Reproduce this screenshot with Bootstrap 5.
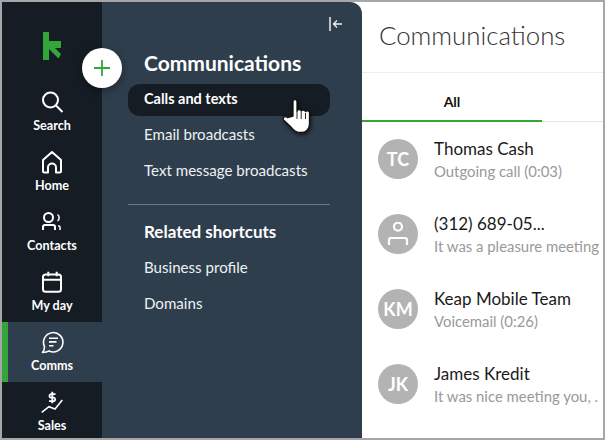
<!doctype html>
<html lang="en">
<head>
<meta charset="utf-8">
<title>Communications</title>
<link href="https://cdn.jsdelivr.net/npm/bootstrap@5.3.0/dist/css/bootstrap.min.css" rel="stylesheet">
<style>
html,body{height:100%;margin:0;overflow:hidden}
body{background:#a6a6a6;padding:2px;font-family:Lato,"Liberation Sans",sans-serif}
.app-frame{width:601px;height:436px;background:#fff;overflow:hidden;position:relative}
.rail{width:100px;flex:none;background:#151c24;color:#fff}
.rail-logo{height:80px;flex:none;padding:30px 0 0 41px}
.rail-item{height:60px;flex:none;font-size:12.6px;font-weight:700;line-height:14px;padding-top:8px}
.rail-item svg{display:block;height:28px;width:28px;margin-bottom:1px}
.rail-item.on{background:#2f3e4d;border-left:6px solid #34a538;padding-right:6px}
.panel{width:260px;flex:none;background:#2f3e4d;border-radius:0 12px 0 0;color:#f2f4f5;padding:0 32px 0 26px}
.panel-top{height:30px;padding-top:15px;margin-right:-13px}
.panel-title{font-size:21px;font-weight:700;line-height:24px;color:#fff;margin:19px 0 9px 16px}
.panel-link{display:block;height:36px;line-height:36px;font-size:15.1px;padding-left:16px;color:#eef1f3;text-decoration:none}
.panel-link.on{height:32px;line-height:30px;background:#151c24;border-radius:12px;font-weight:700;color:#fff;font-size:14.5px}
.panel-rule{margin:16px 0 15px;border:0;border-top:1px solid #6b7783;opacity:1}
.panel-sub{font-size:17px;font-weight:700;color:#fff;line-height:24px;margin:0 0 5px 16px}
.fab{position:absolute;left:80px;top:46px;width:40px;height:40px;border-radius:50%;background:#fff;box-shadow:0 3px 10px rgba(0,0,0,.35)}
.hand{position:absolute;left:280px;top:95px;filter:drop-shadow(1px 2px 2px rgba(0,0,0,.65))}
.main{flex:1;min-width:0;background:#fff}
.main-head{height:71px;border-bottom:1px solid #ececec;padding:18px 0 0 17px;font-size:25.8px;line-height:30px;font-weight:300;color:#333;white-space:nowrap}
.tabs-bar{height:49px;border-bottom:1px solid #e4e4e4}
.tab-on{width:180px;height:49px;border-bottom:2px solid #34a538;text-align:center;font-size:14px;font-weight:700;color:#111;line-height:58px;margin-bottom:-1px}
.conv{height:75px;padding:17px 0 0 16px;white-space:nowrap;overflow:hidden}
.conv-av{width:40px;height:40px;flex:none;border-radius:50%;background:#b3b3b3;color:#fff;font-size:18px;font-weight:700}
.conv-name{font-size:17px;line-height:20px;color:#1a1a1a}
.conv-sub{font-size:14.9px;line-height:20px;color:#999;margin-top:2px}
</style>
</head>
<body>
<div class="app-frame d-flex">
  <nav class="rail d-flex flex-column">
    <div class="rail-logo">
      <svg width="18" height="28" viewBox="0 0 18 28"><path d="M0 0h6v9h12v7h-6l6 6-2.500 4.500L6 17v11H0z" fill="#34a538"/></svg>
    </div>
    <div class="rail-item d-flex flex-column align-items-center">
      <svg viewBox="0 0 28 28" fill="none" stroke="#fff" stroke-width="2"><circle cx="12.500" cy="10" r="7.500"/><path d="M18 15.500l6.500 6.500"/></svg>Search</div>
    <div class="rail-item d-flex flex-column align-items-center">
      <svg viewBox="0 0 28 28" fill="none" stroke="#fff" stroke-width="2" stroke-linejoin="round"><path d="M14 2l9 8v11a1.500 1.500 0 0 1-1.500 1.500H18v-5a4 4 0 0 0-8 0v5H6.500A1.500 1.500 0 0 1 5 21V10z"/></svg>Home</div>
    <div class="rail-item d-flex flex-column align-items-center">
      <svg viewBox="0 0 28 28" fill="none" stroke="#fff" stroke-width="2"><circle cx="10.500" cy="7.500" r="4.500"/><path d="M5 20v-3a2 2 0 0 1 2-2h8a2 2 0 0 1 2 2v3"/><path stroke-width="1.500" d="M19.500 4.500a4 4 0 0 1 0 6.500M20 16h1a1 1 0 0 1 1 1v3"/></svg>Contacts</div>
    <div class="rail-item d-flex flex-column align-items-center">
      <svg viewBox="0 0 28 28" fill="none" stroke="#fff" stroke-width="2"><rect x="5" y="4.500" width="18" height="17.300" rx="2.500"/><path d="M5 9.700h18M10.300 1.700v4.500M18.700 1.700v4.500"/></svg>My day</div>
    <div class="rail-item on d-flex flex-column align-items-center">
      <svg viewBox="0 0 28 28" fill="none" stroke="#fff" stroke-width="1.600"><path d="M6.500 16.500a9.700 9.700 0 1 1 4.500 4.500c-2 1-4 1.300-6.500 1.500 1.300-1.500 2-3.500 2-6z" stroke-linejoin="round"/><path d="M11 8.300h9M11 11.900h7.500M11 15.700h4.500"/></svg>Comms</div>
    <div class="rail-item d-flex flex-column align-items-center">
      <svg viewBox="0 0 28 28" fill="none" stroke="#fff" stroke-width="1.600"><path d="M3.700 22.300L11 16.700l6 2.300 7.300-9"/><path stroke-width="1.800" d="M17.500 4.200h-4.700a1.800 1.800 0 0 0 0 3.500h3a1.800 1.800 0 0 1 0 3.500H11M14.300 1.700v11.600"/></svg>Sales</div>
  </nav>
  <aside class="panel">
    <div class="panel-top d-flex justify-content-end">
      <svg width="14" height="14" viewBox="0 0 14 14" fill="none" stroke="#eef1f3"><path stroke-width="1.500" d="M1 0v14"/><path stroke-width="1.300" d="M13 7H5M8 3.500L4.500 7 8 10.500"/></svg>
    </div>
    <h1 class="panel-title">Communications</h1>
    <a class="panel-link on" href="#">Calls and texts</a>
    <a class="panel-link" href="#">Email broadcasts</a>
    <a class="panel-link" href="#">Text message broadcasts</a>
    <hr class="panel-rule">
    <h2 class="panel-sub">Related shortcuts</h2>
    <a class="panel-link" href="#">Business profile</a>
    <a class="panel-link" href="#">Domains</a>
  </aside>
  <main class="main">
    <div class="main-head">Communications</div>
    <div class="tabs-bar"><div class="tab-on">All</div></div>
    <div class="conv d-flex gap-3">
      <div class="conv-av d-flex align-items-center justify-content-center">TC</div>
      <div><div class="conv-name">Thomas Cash</div><div class="conv-sub">Outgoing call (0:03)</div></div>
    </div>
    <div class="conv d-flex gap-3">
      <div class="conv-av d-flex align-items-center justify-content-center">
        <svg width="24" height="24" viewBox="0 0 24 24" fill="none" stroke="#fff" stroke-width="2.200"><circle cx="12" cy="4.700" r="4"/><path d="M3 23v-5a2 2 0 0 1 2-2h14a2 2 0 0 1 2 2v5"/></svg>
      </div>
      <div><div class="conv-name">(312) 689-05...</div><div class="conv-sub">It was a pleasure meeting</div></div>
    </div>
    <div class="conv d-flex gap-3">
      <div class="conv-av d-flex align-items-center justify-content-center">KM</div>
      <div><div class="conv-name">Keap Mobile Team</div><div class="conv-sub">Voicemail (0:26)</div></div>
    </div>
    <div class="conv d-flex gap-3">
      <div class="conv-av d-flex align-items-center justify-content-center">JK</div>
      <div><div class="conv-name">James Kredit</div><div class="conv-sub">It was nice meeting you, .</div></div>
    </div>
  </main>
  <div class="fab d-flex align-items-center justify-content-center">
    <svg width="18" height="18" viewBox="0 0 18 18" stroke="#34a538" stroke-width="1.800"><path d="M9 1v16M1 9h16"/></svg>
  </div>
  <svg class="hand" width="32" height="40" viewBox="0 0 32 40">
    <path d="M11 19V4.500c0-2.500 4-2.500 4 0V14c.5-1.800 4-1.800 4.200 .2 .5-1.600 4-1.500 4.300 .5 .5-1.500 4-1 4 1V27c0 5-3.500 8.500-8.500 8.500-4.500 0-7.500-2-9.500-5L1.500 23c-1.500-2.500 2-4.500 4-2.500z" fill="#fff" stroke="#111" stroke-width="1.300" stroke-linejoin="round"/>
    <path d="M15 14v8M19.200 15v7M23.500 16v6" stroke="#111" stroke-width=".9"/>
  </svg>
</div>
<script src="https://cdn.jsdelivr.net/npm/bootstrap@5.3.0/dist/js/bootstrap.bundle.min.js"></script>
</body>
</html>
